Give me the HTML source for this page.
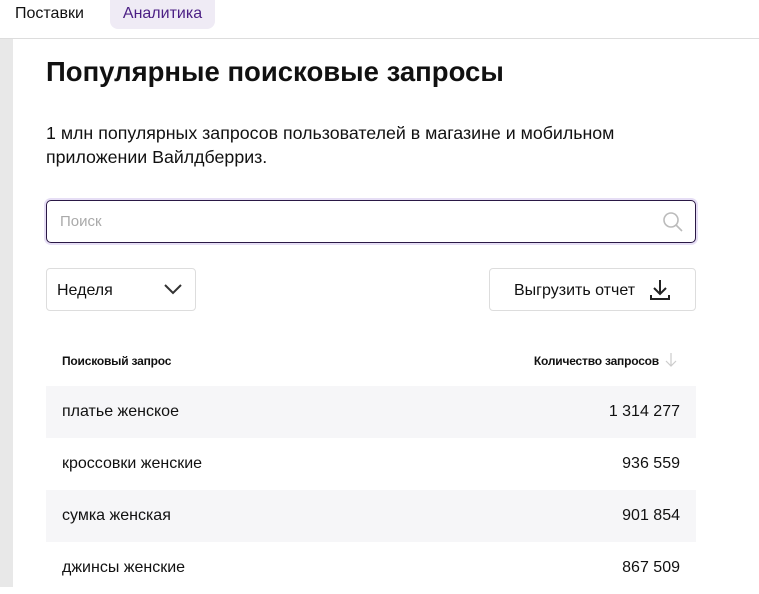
<!DOCTYPE html>
<html><head><meta charset="utf-8"><style>
*{box-sizing:border-box;margin:0;padding:0}
body{width:759px;height:587px;overflow:hidden;background:#fff;font-family:"Liberation Sans","Noto Sans CJK SC",sans-serif;color:#111;position:relative}
.top{position:absolute;left:0;top:0;width:759px;height:39px;border-bottom:1px solid #ddd}
.tab{position:absolute;top:0;height:29px;line-height:28px;font-size:16px}
.strip{position:absolute;left:0;top:39px;width:13px;height:548px;background:#e8e8e8}
.abs{position:absolute}
.row{position:absolute;left:46px;width:650px;height:52px;font-size:16px;line-height:52px}
.row .q{position:absolute;left:16px}
.row .n{position:absolute;right:16px}
.hd{position:absolute;top:354px;font-size:12px;font-weight:bold;letter-spacing:-0.2px}
</style></head><body>
<div class="top">
<div class="tab" style="left:15px">Поставки</div>
<div class="tab" style="left:110px;width:105px;background:#efebf5;border-radius:0 0 8px 8px;color:#4b1f84;text-align:center">Аналитика</div>
</div>
<div class="strip"></div>
<div class="abs" style="left:46px;top:55px;font-size:27.5px;font-weight:bold;line-height:34px">Популярные поисковые запросы</div>
<div class="abs" style="left:46px;top:121px;font-size:17.8px;line-height:24px;width:660px">1 млн популярных запросов пользователей в магазине и мобильном<br>приложении Вайлдберриз.</div>
<div class="abs" style="left:46px;top:200px;width:650px;height:43px;border:1.5px solid #2a1845;border-radius:5px;box-shadow:0 0 0 2px #e6def5">
<span class="abs" style="left:13px;top:12px;font-size:15px;color:#aaa">Поиск</span>
<svg class="abs" style="right:10px;top:9px" width="24" height="24" viewBox="0 0 24 24" fill="none" stroke="#bbb" stroke-width="1.6"><circle cx="10" cy="10" r="7"/><path d="M15 15l6 6"/></svg>
</div>
<div class="abs" style="left:46px;top:268px;width:150px;height:43px;border:1px solid #ddd;border-radius:4px">
<span class="abs" style="left:10px;top:13px;font-size:16px">Неделя</span>
<svg class="abs" style="left:116px;top:12px" width="20" height="16" viewBox="0 0 20 16" fill="none" stroke="#333" stroke-width="2"><path d="M2 4l8 8 8-8"/></svg>
</div>
<div class="abs" style="left:489px;top:268px;width:207px;height:43px;border:1px solid #ddd;border-radius:4px">
<span class="abs" style="left:24px;top:13px;font-size:16px">Выгрузить отчет</span>
<svg class="abs" style="left:160px;top:10px" width="20" height="22" viewBox="0 0 20 22" fill="none" stroke="#222" stroke-width="2"><path d="M10 1v13M4 9l6 6 6-6M1 16v4h18v-4"/></svg>
</div>
<div class="hd" style="left:62px">Поисковый запрос</div>
<div class="hd" style="right:100px">Количество запросов</div>
<svg class="abs" style="left:665px;top:352px" width="12" height="16" viewBox="0 0 12 16" fill="none" stroke="#ccc" stroke-width="1.2"><path d="M6 1v13M1 9l5 5 5-5"/></svg>
<div class="row" style="top:386px;background:#f6f6f8"><span class="q">платье женское</span><span class="n">1 314 277</span></div>
<div class="row" style="top:438px"><span class="q">кроссовки женские</span><span class="n">936 559</span></div>
<div class="row" style="top:490px;background:#f6f6f8"><span class="q">сумка женская</span><span class="n">901 854</span></div>
<div class="row" style="top:542px"><span class="q">джинсы женские</span><span class="n">867 509</span></div>
</body></html>
